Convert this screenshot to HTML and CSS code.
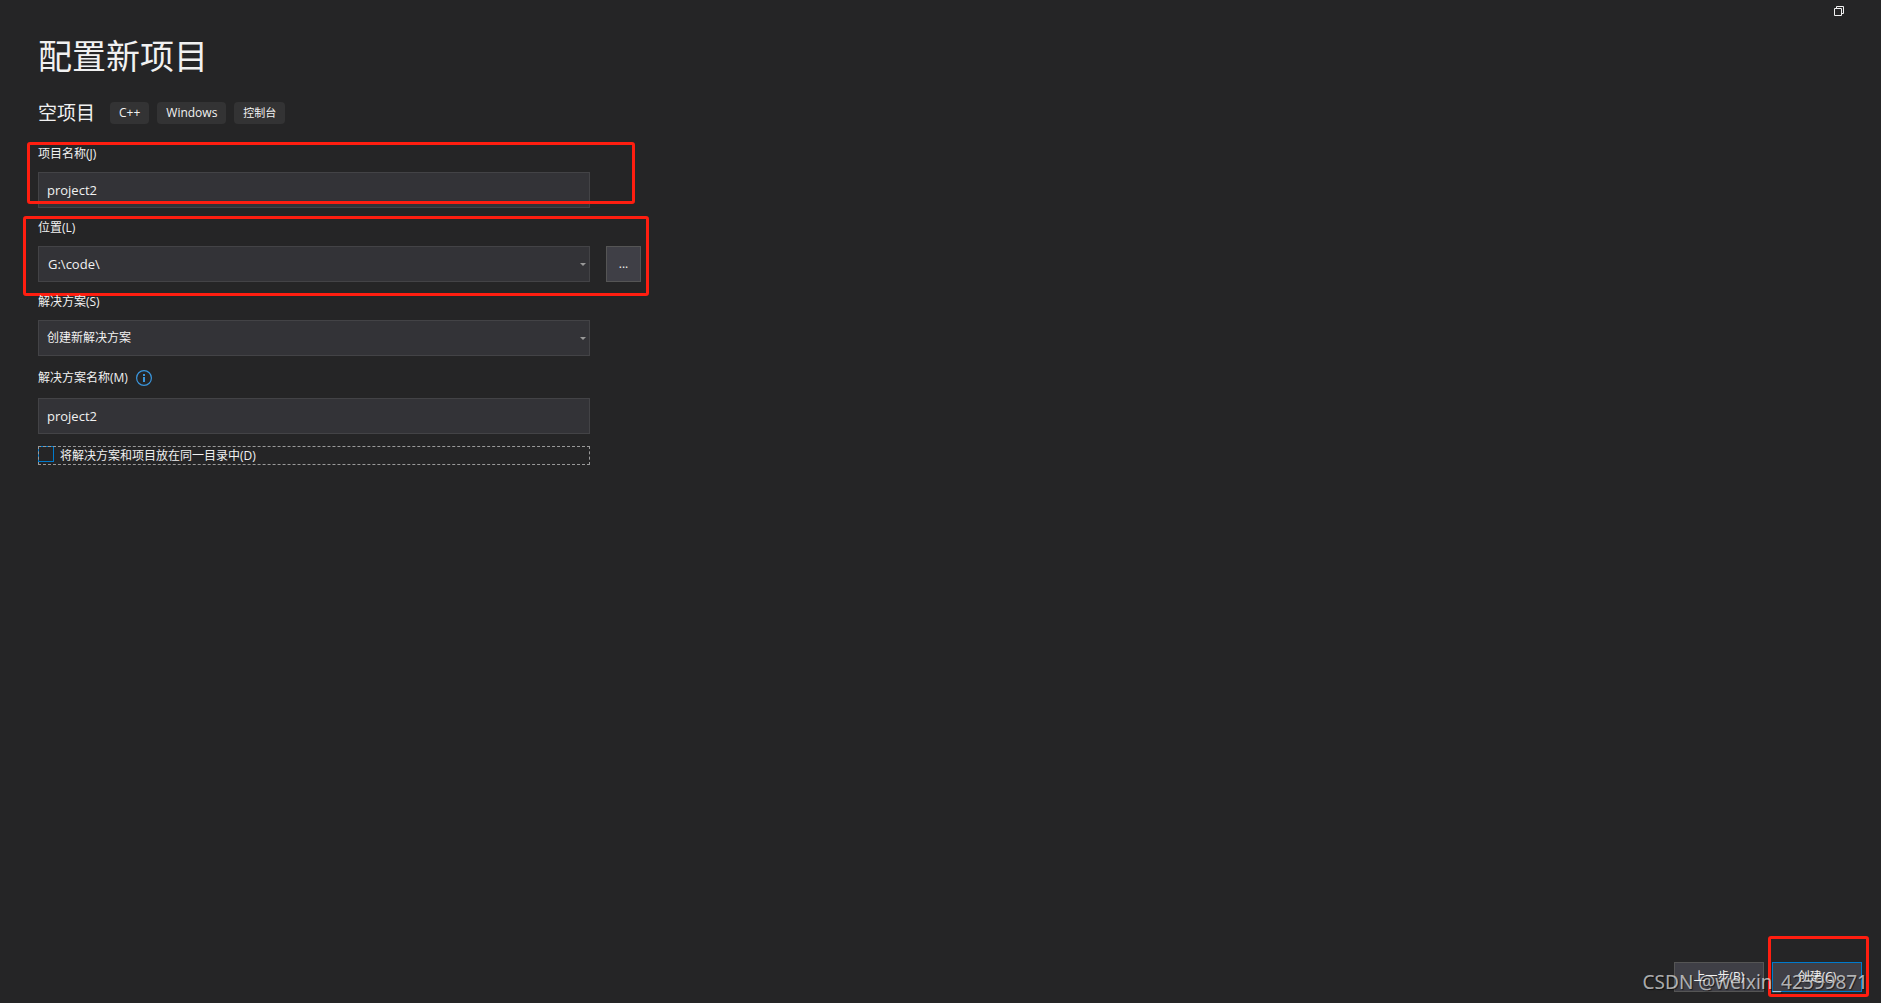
FILE: index.html
```html
<!DOCTYPE html>
<html lang="zh-CN">
<head>
    <meta charset="UTF-8">
    <meta name="viewport" content="width=device-width, initial-scale=1.0">
    <title>配置新项目</title>
    <link rel="stylesheet" href="styles.css">
</head>
<body>
    <header class="titlebar">
        <button type="button" class="restore" aria-label="还原">
            <svg width="10" height="10" viewBox="0 0 10 10" fill="none" stroke="#f1f1f1">
                <path d="M.5 2.5h7v7h-7zM2.5 2.5v-2h7v7h-2"/>
            </svg>
        </button>
    </header>

    <form id="projectForm" class="page">
        <h1>配置新项目</h1>
        <div class="template">
            <h2>空项目</h2>
            <ul class="tags">
                <li>C++</li>
                <li>Windows</li>
                <li class="small">控制台</li>
            </ul>
        </div>

        <div class="fields">
            <div class="field">
                <label for="projectName">项目名称(J)</label>
                <input type="text" id="projectName" class="box" value="project2" autocomplete="off">
                <div class="mark mark-name"></div>
            </div>

            <div class="field">
                <label for="location">位置(L)</label>
                <div class="location">
                    <div class="select">
                        <select id="location" class="box path">
                            <option>G:\code\</option>
                        </select>
                        <svg class="arrow" width="6" height="3" viewBox="0 0 6 3"><path d="M0 0h6L3 3z" fill="#999"/></svg>
                    </div>
                    <button type="button" class="browse" aria-label="浏览">...</button>
                </div>
                <div class="mark mark-location"></div>
            </div>

            <div class="field">
                <label for="solution">解决方案(S)</label>
                <div class="select">
                    <select id="solution" class="box">
                        <option>创建新解决方案</option>
                    </select>
                    <svg class="arrow" width="6" height="3" viewBox="0 0 6 3"><path d="M0 0h6L3 3z" fill="#999"/></svg>
                </div>
            </div>

            <div class="field">
                <label for="solutionName" class="with-info">解决方案名称(M)
                    <svg class="info" width="16" height="16" viewBox="0 0 16 16">
                        <circle cx="8" cy="8" r="7.4" fill="none" stroke="#3a96dd" stroke-width="1.2"/>
                        <path d="M7 4h2v2H7zM7 7h2v5H7z" fill="#3a96dd"/>
                    </svg>
                </label>
                <input type="text" id="solutionName" class="box" value="project2" autocomplete="off">
            </div>

            <label class="check">
                <input type="checkbox" id="sameDir">
                <span>将解决方案和项目放在同一目录中(D)</span>
            </label>
        </div>
    </form>

    <footer class="actions">
        <button type="button" class="action">上一步(B)</button>
        <div class="create">
            <button type="submit" form="projectForm" class="action primary">创建(C)</button>
            <div class="mark mark-create"></div>
        </div>
        <span class="watermark">CSDN @weixin_42599871</span>
    </footer>
</body>
</html>
```

FILE: styles.css
```css
* {
    box-sizing: border-box;
}
body {
    margin: 0;
    min-height: 100vh;
    display: flex;
    flex-direction: column;
    background: #252526;
    color: #f1f1f1;
    font-family: "Open Sans", "Noto Sans CJK SC", sans-serif;
    font-size: 12px;
    line-height: 16px;
    overflow: hidden;
}
input, select, button {
    font: inherit;
    color: inherit;
}
svg {
    display: block;
}
.titlebar {
    display: flex;
    justify-content: flex-end;
    padding: 6px 37px 0 0;
}
.restore {
    padding: 0;
    border: none;
    background: none;
}
.page {
    flex: 1;
    padding: 16px 38px;
}
h1 {
    margin: 0;
    font-size: 34px;
    font-weight: normal;
    line-height: 48px;
}
.template {
    display: flex;
    align-items: center;
    gap: 15px;
    margin-top: 20px;
}
h2 {
    margin: 0;
    font-size: 19px;
    font-weight: normal;
    line-height: 26px;
}
.tags {
    display: flex;
    gap: 8px;
    margin: 0;
    padding: 0;
    list-style: none;
}
.tags li {
    padding: 3px 9px;
    border-radius: 4px;
    background: #333334;
}
.tags .small {
    font-size: 11px;
}
.fields {
    display: flex;
    flex-direction: column;
    gap: 12px;
    max-width: 552px;
    margin-top: 20px;
}
.field {
    position: relative;
    display: flex;
    flex-direction: column;
    gap: 10px;
}
.field label {
    display: flex;
    align-items: center;
    gap: 8px;
}
.field .with-info {
    min-height: 20px;
}
.box {
    display: block;
    width: 100%;
    height: 36px;
    padding: 0 8px;
    border: 1px solid #434346;
    border-radius: 0;
    background: #333337;
    outline: none;
    appearance: none;
}
input.box, .path {
    font-size: 13px;
}
.path {
    padding: 0 9px;
}
.select {
    position: relative;
    flex: none;
    width: 100%;
}
.arrow {
    position: absolute;
    top: 17px;
    right: 4px;
    pointer-events: none;
}
.location {
    display: flex;
    gap: 16px;
}
.browse {
    flex: none;
    width: 35px;
    padding: 0;
    border: 1px solid #555;
    background: #3f3f46;
}
.check {
    display: flex;
    gap: 6px;
    outline: 1px dashed #999;
    outline-offset: -1px;
    line-height: 19px;
}
.check input {
    appearance: none;
    width: 16px;
    height: 16px;
    margin: 0;
    border: 1px solid #007acc;
}
.actions {
    position: relative;
    display: flex;
    justify-content: flex-end;
    gap: 8px;
    padding: 0 19px 11px;
}
.action {
    width: 90px;
    height: 30px;
    padding: 0;
    border: 1px solid #555;
    background: #3f3f46;
}
.primary {
    border-color: #007acc;
}
.create {
    position: relative;
}
/* red highlight frames */
.mark {
    position: absolute;
    border: 3px solid #ff1e10;
    border-radius: 3px;
    pointer-events: none;
}
.mark-name {
    inset: -4px -45px 4px -11px;
}
.mark-location {
    inset: -4px -59px -14px -15px;
}
.mark-create {
    inset: -26px -7px -5px -4px;
}
.watermark {
    position: absolute;
    right: 13px;
    bottom: 7px;
    color: rgba(255, 255, 255, 0.65);
    font-family: "Noto Sans", sans-serif;
    font-size: 19px;
    line-height: 28px;
    text-shadow: 1px 1px 1px rgba(0, 0, 0, 0.6);
    pointer-events: none;
}
```
